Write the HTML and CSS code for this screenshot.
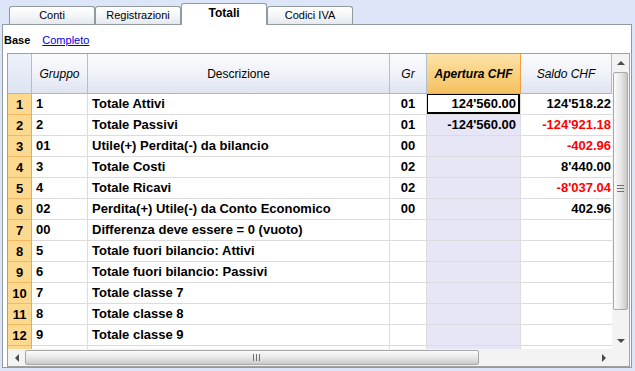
FILE: index.html
```
<!DOCTYPE html>
<html>
<head>
<meta charset="utf-8">
<link rel="stylesheet" href="styles.css">
</head>
<body>
<div class="win">
  <div class="tabs">
    <div class="tab">Conti</div>
    <div class="tab">Registrazioni</div>
    <div class="tab active">Totali</div>
    <div class="tab">Codici IVA</div>
  </div>
  <div class="panel">
    <div class="views"><span class="view-cur">Base</span><a class="view-link" href="#">Completo</a></div>
    <div class="gridbox">
      <div class="gridtop">
        <div class="area">
          <div class="grid">
            <div class="h corner"></div>
            <div class="h it">Gruppo</div>
            <div class="h">Descrizione</div>
            <div class="h it">Gr</div>
            <div class="h hap">Apertura CHF</div>
            <div class="h it">Saldo CHF</div>

            <div class="rn">1</div><div class="c grp">1</div><div class="c desc">Totale Attivi</div><div class="c gr">01</div><div class="c ap num sel">124'560.00</div><div class="c sa num">124'518.22</div>
            <div class="rn">2</div><div class="c grp">2</div><div class="c desc">Totale Passivi</div><div class="c gr">01</div><div class="c ap num">-124'560.00</div><div class="c sa num neg">-124'921.18</div>
            <div class="rn">3</div><div class="c grp">01</div><div class="c desc">Utile(+) Perdita(-) da bilancio</div><div class="c gr">00</div><div class="c ap num"></div><div class="c sa num neg">-402.96</div>
            <div class="rn">4</div><div class="c grp">3</div><div class="c desc">Totale Costi</div><div class="c gr">02</div><div class="c ap num"></div><div class="c sa num">8'440.00</div>
            <div class="rn">5</div><div class="c grp">4</div><div class="c desc">Totale Ricavi</div><div class="c gr">02</div><div class="c ap num"></div><div class="c sa num neg">-8'037.04</div>
            <div class="rn">6</div><div class="c grp">02</div><div class="c desc">Perdita(+) Utile(-) da Conto Economico</div><div class="c gr">00</div><div class="c ap num"></div><div class="c sa num">402.96</div>
            <div class="rn">7</div><div class="c grp">00</div><div class="c desc">Differenza deve essere = 0 (vuoto)</div><div class="c gr"></div><div class="c ap num"></div><div class="c sa num"></div>
            <div class="rn">8</div><div class="c grp">5</div><div class="c desc">Totale fuori bilancio: Attivi</div><div class="c gr"></div><div class="c ap num"></div><div class="c sa num"></div>
            <div class="rn">9</div><div class="c grp">6</div><div class="c desc">Totale fuori bilancio: Passivi</div><div class="c gr"></div><div class="c ap num"></div><div class="c sa num"></div>
            <div class="rn">10</div><div class="c grp">7</div><div class="c desc">Totale classe 7</div><div class="c gr"></div><div class="c ap num"></div><div class="c sa num"></div>
            <div class="rn">11</div><div class="c grp">8</div><div class="c desc">Totale classe 8</div><div class="c gr"></div><div class="c ap num"></div><div class="c sa num"></div>
            <div class="rn">12</div><div class="c grp">9</div><div class="c desc">Totale classe 9</div><div class="c gr"></div><div class="c ap num"></div><div class="c sa num"></div>
            <div class="rn"></div><div class="c grp"></div><div class="c desc"></div><div class="c gr"></div><div class="c ap num"></div><div class="c sa num"></div>
          </div>
        </div>
        <div class="vscroll">
          <div class="sbtn"><span class="tri-up"></span></div>
          <div class="vthumb"><span class="vgrip"></span></div>
          <div class="sfill"></div>
          <div class="sbtn"><span class="tri-down"></span></div>
        </div>
      </div>
      <div class="gridbottom">
        <div class="hscroll">
          <div class="hbtn"><span class="tri-left"></span></div>
          <div class="hthumb"><span class="hgrip"></span></div>
          <div class="sfill"></div>
          <div class="hbtn"><span class="tri-right"></span></div>
        </div>
        <div class="scorner"></div>
      </div>
    </div>
  </div>
</div>
</body>
</html>
```
FILE: styles.css
```
* { box-sizing: border-box; }
html, body { margin: 0; padding: 0; }
body {
  width: 635px;
  height: 371px;
  overflow: hidden;
  background: #dde5f9;
  font-family: "Liberation Sans", Arial, sans-serif;
  color: #000;
}
.win { display: flex; flex-direction: column; }
.tabs {
  display: flex;
  align-items: flex-end;
  height: 24px;
  padding-left: 9px;
  position: relative;
  z-index: 2;
}
.tab {
  width: 86px;
  height: 18px;
  border: 1px solid #919b9c;
  border-bottom: none;
  border-radius: 3px 3px 0 0;
  background: linear-gradient(#ffffff, #f4f5f8 55%, #e4e8ef);
  font-size: 11px;
  text-align: center;
  line-height: 17px;
}
.tab.active {
  height: 22px;
  margin-bottom: -1px;
  background: #ffffff;
  font-weight: bold;
  font-size: 12px;
  line-height: 19px;
}
.panel {
  margin-left: 2px;
  width: 630px;
  height: 344px;
  border: 1px solid #919b9c;
  background: #fff;
  padding: 0 1px 0 4px;
  display: flex;
  flex-direction: column;
}
.views {
  height: 28px;
  display: flex;
  align-items: center;
  padding-top: 1px;
  font-size: 11px;
}
.view-cur { font-weight: bold; margin-left: -3px; }
.view-link { color: #0000ee; margin-left: 12px; }
.gridbox {
  width: 623px;
  height: 314px;
  border: 1px solid #a0a0a0;
  display: flex;
  flex-direction: column;
}
.gridtop { display: flex; height: 295px; }
.area { width: 604px; height: 295px; overflow: hidden; }
.grid {
  display: grid;
  grid-template-columns: 24px 56px 302px 37px 94px 91px;
  grid-template-rows: 40px;
  grid-auto-rows: 21px;
}
.h {
  background: linear-gradient(#fbfcfe, #eef1f8 55%, #dfe4f0);
  border-right: 1px solid #a9c0d8;
  border-bottom: 1px solid #a9b8cc;
  font-size: 12px;
  display: flex;
  align-items: center;
  justify-content: center;
}
.h.it { font-style: italic; }
.h.corner { background: linear-gradient(#eef2fa, #dde4f2); }
.h.hap {
  background: linear-gradient(#fde3a8, #f9d07e 55%, #f5c060);
  border-right: 1px solid #f0a040;
  font-weight: bold;
  font-style: italic;
}
.rn {
  background: #fdd98f;
  border-right: 1px solid #f2a845;
  border-bottom: 1px solid #f4b860;
  font-size: 13px;
  font-weight: bold;
  display: flex;
  align-items: center;
  justify-content: center;
}
.c {
  border-right: 1px solid #dcdcdc;
  border-bottom: 1px solid #dcdcdc;
  font-size: 13px;
  font-weight: bold;
  line-height: 20px;
  white-space: nowrap;
  overflow: hidden;
}
.grp { padding-left: 4px; }
.desc { padding-left: 4px; }
.gr { text-align: center; }
.num { text-align: right; }
.ap { background: #e6e6f6; padding-right: 4px; }
.sa { padding-right: 1px; border-right: none; }
.neg { color: #ff0000; }
.sel {
  background: #fff;
  box-shadow: inset 0 0 0 1px #000, inset -1px -1px 0 1px #000;
}
.vscroll {
  width: 17px;
  height: 295px;
  background: #f3f3f3;
  display: flex;
  flex-direction: column;
  align-items: center;
}
.sbtn {
  width: 17px;
  height: 17px;
  display: flex;
  align-items: center;
  justify-content: center;
  flex: none;
}
.sfill { flex: 1; }
.vthumb {
  width: 15px;
  height: 238px;
  margin-top: 1px;
  border: 1px solid #a8a8a8;
  border-radius: 2px;
  background: linear-gradient(to right, #fbfbfb, #e8e8e8 50%, #c9c9c9);
  display: flex;
  align-items: center;
  justify-content: center;
  flex: none;
}
.vgrip {
  width: 7px;
  height: 7px;
  background: linear-gradient(#6f6f6f 0 1px, transparent 1px 3px, #6f6f6f 3px 4px, transparent 4px 6px, #6f6f6f 6px 7px);
  margin-top: -5px;
}
.gridbottom { display: flex; height: 17px; }
.hscroll {
  width: 604px;
  height: 17px;
  background: #f3f3f3;
  display: flex;
  align-items: center;
}
.hbtn {
  width: 17px;
  height: 17px;
  display: flex;
  align-items: center;
  justify-content: center;
  flex: none;
}
.hthumb {
  width: 454px;
  height: 15px;
  border: 1px solid #a8a8a8;
  border-radius: 2px;
  background: linear-gradient(#fbfbfb, #e8e8e8 50%, #c9c9c9);
  display: flex;
  align-items: center;
  justify-content: center;
  flex: none;
}
.hgrip {
  width: 7px;
  height: 7px;
  margin-left: 9px;
  background: linear-gradient(to right, #6f6f6f 0 1px, transparent 1px 3px, #6f6f6f 3px 4px, transparent 4px 6px, #6f6f6f 6px 7px);
}
.scorner { width: 17px; height: 17px; background: #f3f3f3; }
.tri-up { width: 0; height: 0; border-left: 4px solid transparent; border-right: 4px solid transparent; border-bottom: 4px solid #4a4a4a; }
.tri-down { width: 0; height: 0; border-left: 4px solid transparent; border-right: 4px solid transparent; border-top: 4px solid #4a4a4a; }
.tri-left { width: 0; height: 0; border-top: 4px solid transparent; border-bottom: 4px solid transparent; border-right: 4px solid #4a4a4a; }
.tri-right { width: 0; height: 0; border-top: 4px solid transparent; border-bottom: 4px solid transparent; border-left: 4px solid #4a4a4a; }
```
